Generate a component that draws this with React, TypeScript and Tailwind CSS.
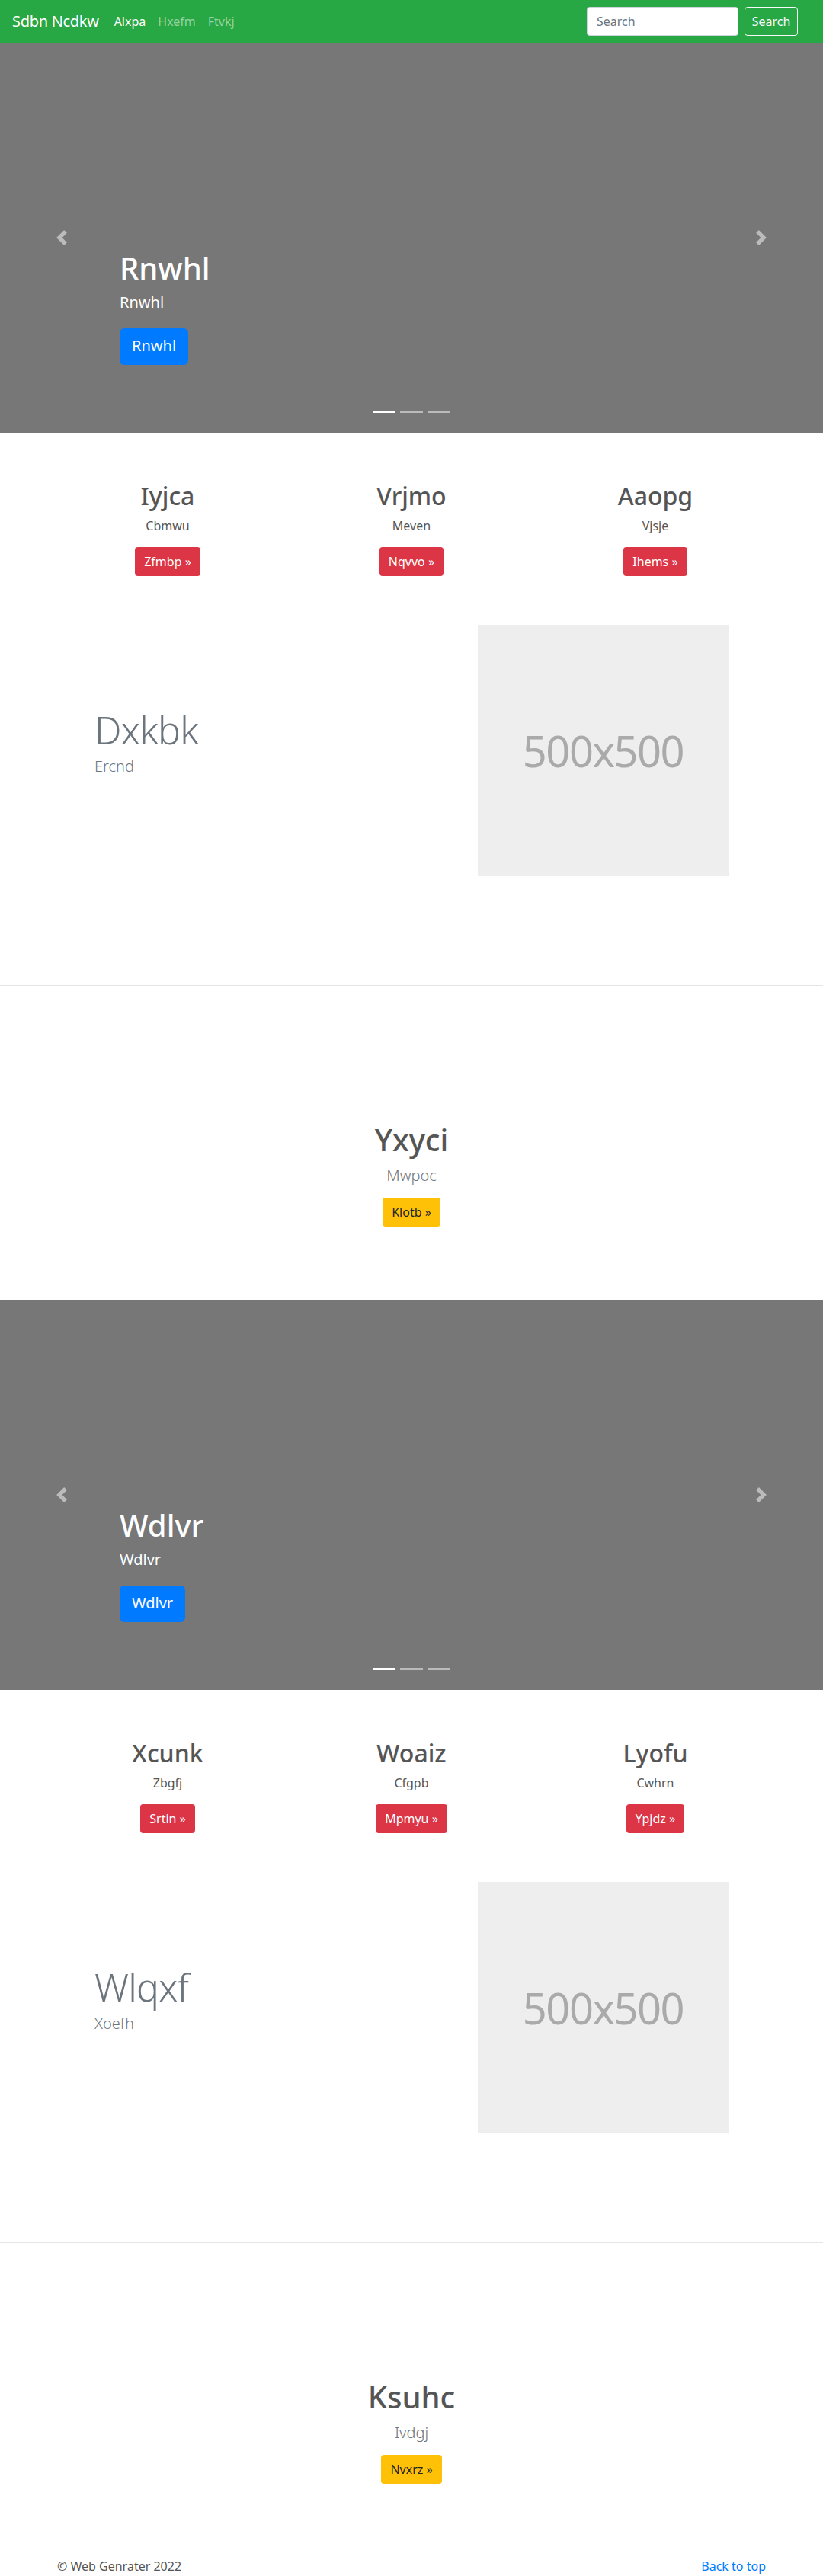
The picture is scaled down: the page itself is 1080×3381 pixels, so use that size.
import React from "react";

interface Col {
  title: string;
  text: string;
  btn: string;
}

interface BlockData {
  slide: string;
  cols: Col[];
  feature: string;
  featureLead: string;
  jumbo: string;
  jumboLead: string;
  jumboBtn: string;
}

const blocks: BlockData[] = [
  {
    slide: "Rnwhl",
    cols: [
      { title: "Iyjca", text: "Cbmwu", btn: "Zfmbp »" },
      { title: "Vrjmo", text: "Meven", btn: "Nqvvo »" },
      { title: "Aaopg", text: "Vjsje", btn: "Ihems »" },
    ],
    feature: "Dxkbk",
    featureLead: "Ercnd",
    jumbo: "Yxyci",
    jumboLead: "Mwpoc",
    jumboBtn: "Klotb »",
  },
  {
    slide: "Wdlvr",
    cols: [
      { title: "Xcunk", text: "Zbgfj", btn: "Srtin »" },
      { title: "Woaiz", text: "Cfgpb", btn: "Mpmyu »" },
      { title: "Lyofu", text: "Cwhrn", btn: "Ypjdz »" },
    ],
    feature: "Wlqxf",
    featureLead: "Xoefh",
    jumbo: "Ksuhc",
    jumboLead: "Ivdgj",
    jumboBtn: "Nvxrz »",
  },
];

function Navbar() {
  return (
    <nav className="flex h-14 items-center bg-[#28a745] pl-4 pr-[33px]">
      <a href="#" className="mr-3 text-xl leading-[30px] tracking-[-0.3px] text-white">
        Sdbn Ncdkw
      </a>
      <ul className="flex">
        <li>
          <a href="#" className="block px-2 py-2 text-white">Alxpa</a>
        </li>
        <li>
          <a href="#" className="block px-2 py-2 text-white/50">Hxefm</a>
        </li>
        <li>
          <a href="#" className="block px-2 py-2 text-white/50">Ftvkj</a>
        </li>
      </ul>
      <form className="ml-auto flex items-center">
        <input
          type="text"
          placeholder="Search"
          className="mr-2 h-[38px] w-[199px] rounded border border-[#ced4da] bg-white px-3 text-base text-[#495057] placeholder:text-[#6c757d] outline-none"
        />
        <button
          type="button"
          className="h-[38px] w-[70px] rounded border border-[#f8f9fa] text-base text-[#f8f9fa]"
        >
          Search
        </button>
      </form>
    </nav>
  );
}

function Carousel({ label }: { label: string }) {
  return (
    <div className="relative h-[512px] bg-[#777]">
      {/* prev / next controls */}
      <a href="#" className="absolute left-0 top-0 flex h-full w-[15%] items-center justify-center opacity-50">
        <svg width="20" height="20" viewBox="0 0 8 8" fill="#fff">
          <path d="M5.25 0l-4 4 4 4 1.5-1.5L4.25 4l2.5-2.5L5.25 0z" />
        </svg>
      </a>
      <a href="#" className="absolute right-0 top-0 flex h-full w-[15%] items-center justify-center opacity-50">
        <svg width="20" height="20" viewBox="0 0 8 8" fill="#fff">
          <path d="M2.75 0l-1.5 1.5L3.75 4l-2.5 2.5L2.75 8l4-4-4-4z" />
        </svg>
      </a>

      {/* caption */}
      <div className="absolute bottom-[89px] left-[157px] text-white">
        <h1 className="mb-[6px] text-[40px] font-medium leading-[48px]">{label}</h1>
        <p className="mb-[19px] text-xl leading-[30px]">{label}</p>
        <a href="#" className="inline-block h-12 rounded-md bg-[#007bff] px-4 text-xl leading-[46px] text-white">
          {label}
        </a>
      </div>

      {/* indicators */}
      <ol className="absolute bottom-[26px] left-0 flex w-full justify-center gap-[6px]">
        <li className="h-[3px] w-[30px] bg-white" />
        <li className="h-[3px] w-[30px] bg-white/50" />
        <li className="h-[3px] w-[30px] bg-white/50" />
      </ol>
    </div>
  );
}

function Marketing({ cols }: { cols: Col[] }) {
  return (
    <div className="mx-auto mt-16 flex w-[960px]">
      {cols.map((c) => (
        <div key={c.title} className="mb-6 flex w-1/3 flex-col items-center px-[15px] text-center">
          <h2 className="mb-2 text-[32px] font-medium leading-[38px] text-[#555]">{c.title}</h2>
          <p className="mx-3 mb-4 text-base leading-6 text-[#555]">{c.text}</p>
          <a href="#" className="inline-block h-[38px] rounded bg-[#dc3545] px-3 text-base leading-[38px] text-white">
            {c.btn}
          </a>
        </div>
      ))}
    </div>
  );
}

function Featurette({ title, lead }: { title: string; lead: string }) {
  return (
    <div className="mx-auto mb-[143px] mt-10 flex w-[862px] items-center">
      <div className="w-[503px] px-[15px]">
        <h2 className="mb-2 text-[50px] font-light leading-none tracking-[-0.05rem] text-[#6c757d]">
          {title}
        </h2>
        <p className="mb-4 text-xl font-light leading-[30px] text-[#6c757d]">{lead}</p>
      </div>
      <div className="w-[359px] px-[15px]">
        <div className="flex h-[330px] w-[329px] items-center justify-center bg-[#eee]">
          <span className="text-[56px] tracking-[-1.5px] text-[#aaa]">500x500</span>
        </div>
      </div>
    </div>
  );
}

function Jumbo({ title, lead, btn }: { title: string; lead: string; btn: string }) {
  return (
    <div className="flex flex-col items-center pb-[96px] pt-[178px] text-center">
      <h1 className="mb-2 text-[40px] font-medium leading-[48px] text-[#555]">{title}</h1>
      <p className="mb-[14px] text-xl font-light leading-[30px] text-[#6c757d]">{lead}</p>
      <a href="#" className="inline-block h-[38px] rounded bg-[#ffc107] px-3 text-base leading-[38px] text-[#212529]">
        {btn}
      </a>
    </div>
  );
}

function Block({ data }: { data: BlockData }) {
  return (
    <section>
      <Carousel label={data.slide} />
      <Marketing cols={data.cols} />
      <Featurette title={data.feature} lead={data.featureLead} />
      <hr className="border-0 border-t border-black/10" />
      <Jumbo title={data.jumbo} lead={data.jumboLead} btn={data.jumboBtn} />
    </section>
  );
}

export default function App() {
  return (
    <div className="w-[1080px] bg-white font-['Noto_Sans',sans-serif] text-[#555]">
      <Navbar />
      {blocks.map((b) => (
        <Block key={b.slide} data={b} />
      ))}
      <footer className="mx-auto flex w-[960px] justify-between px-[15px] text-base leading-6">
        <p className="text-[#555]">© Web Genrater 2022</p>
        <p>
          <a href="#" className="text-[#007bff]">Back to top</a>
        </p>
      </footer>
    </div>
  );
}
